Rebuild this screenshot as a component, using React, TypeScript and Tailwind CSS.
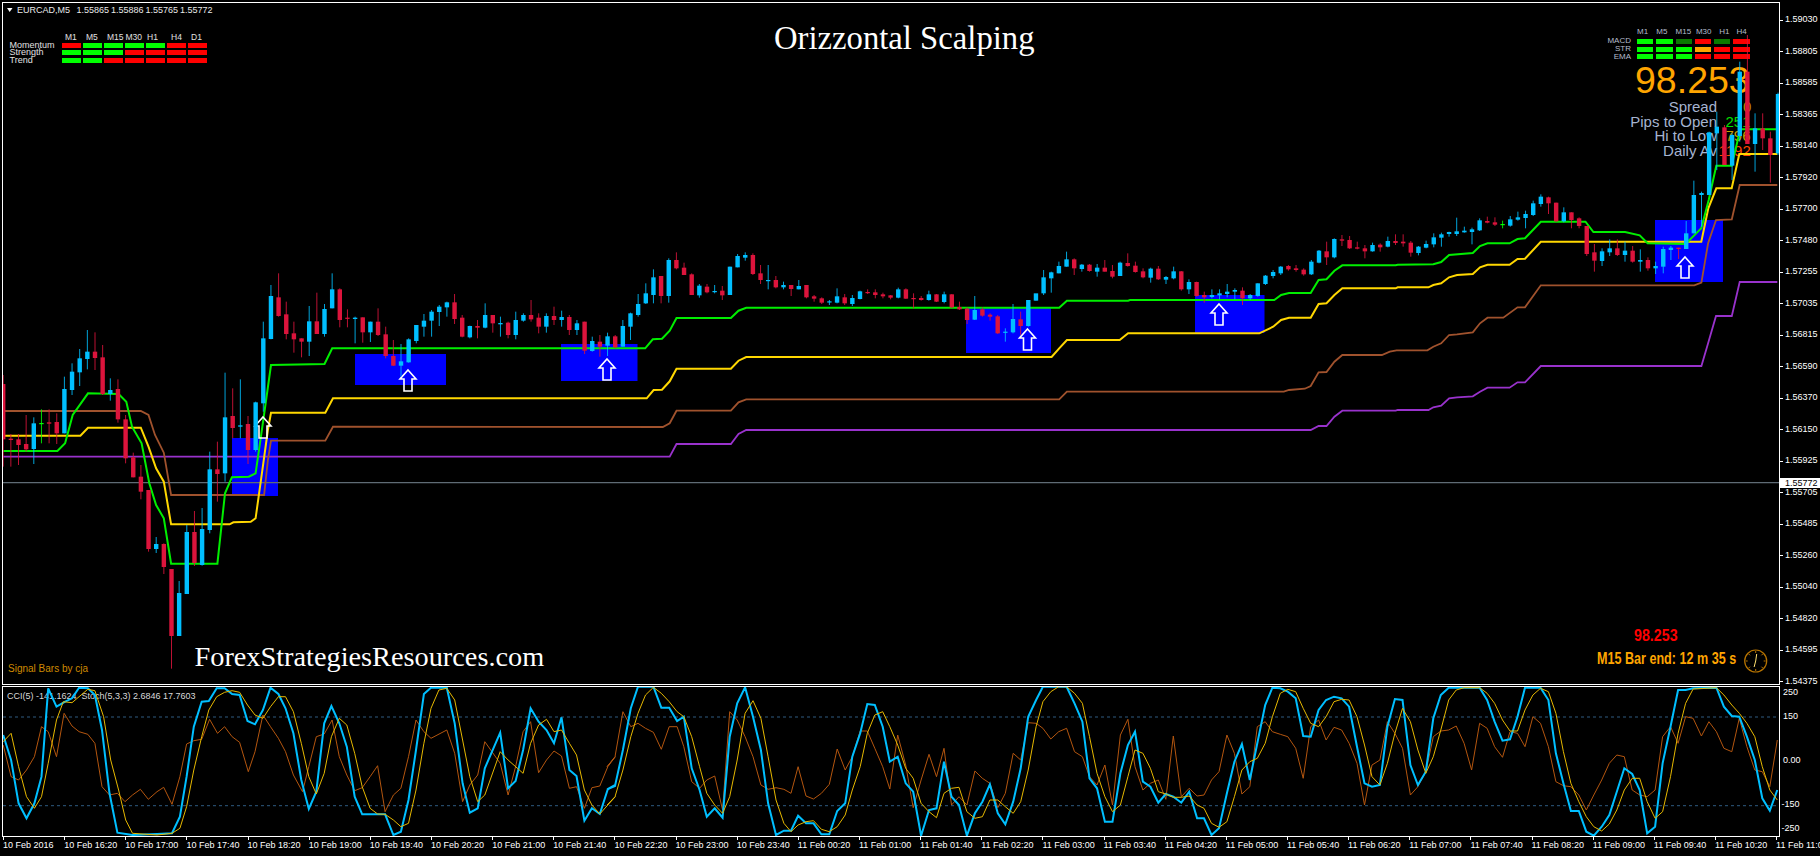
import React from "react";

type Bar = number[];
const seg3: Bar[] = [
[285,560,312,478,1],[462,560,476,480,1],[462,555,478,495,1],[405,515,492,508,1],[412,552,430,507,0],[388,490,429,431,2],[388,490,427,431,1],[400,492,426,460,1],[290,460,327,460,0],[250,345,275,330,0],
[207,318,235,277,0],[150,268,215,237,0],[157,270,215,234,1],[195,345,232,342,1],[295,362,330,342,0],[298,428,327,418,1],[405,550,418,535,1],[518,592,532,592,1],[555,658,590,635,1],[630,815,630,807,1],
[771,819,792,807,0],[790,882,792,861,1],[867,1166,867,1068,1],[903,1068,939,1068,0],[735,942,756,942,0],[693,858,756,849,1],[684,857,747,855,0],[515,760,568,750,0],[485,665,568,582,1],[278,605,412,580,0],
[325,475,408,444,1],[298,475,436,440,0],[408,552,432,510,1],[365,515,367,510,0],[125,395,175,370,0],[15,178,48,177,0],[-20,110,52,108,1],[65,178,103,162,1],[125,218,160,178,1],[175,232,175,185,1],
[78,228,124,185,0],[38,162,124,162,1],[72,170,87,162,0],[-20,85,28,85,0],[25,142,28,120,1],[88,142,113,116,1],[110,190,113,117,0],[112,188,112,157,1],[125,186,125,157,0],[85,168,125,165,1],
[140,235,163,228,1],[180,258,228,257,1],[192,290,244,257,0],[175,248,178,247,0],[135,190,135,183,0],[102,170,122,140,0],[90,170,95,122,0],[75,138,80,96,0],[65,110,67,82,0],[42,132,67,117,1],
[105,172,113,170,1],[137,175,138,172,0],[120,175,138,143,1],[70,145,105,143,0],[105,158,105,130,1],[110,170,129,133,0],[125,175,128,165,1],[95,178,120,165,0],[100,125,105,122,0],[60,125,105,118,1],
[100,160,113,140,1],[100,158,108,140,0],[80,135,108,120,1],[92,140,111,120,0],[105,165,111,150,1],[120,165,130,150,0],[125,222,125,212,1],[170,215,183,213,0],
];
const seg4: Bar[] = [
[345,410,365,380,1],[338,408,349,377,0],[345,385,349,382,1],[300,380,318,380,0],[278,360,280,320,0],[222,290,252,285,0],[190,252,220,250,0],[148,250,172,225,0],[168,250,168,228,1],[115,248,120,228,0],
[97,148,120,145,1],[128,165,143,165,1],[160,225,163,225,1],[192,233,197,226,0],[192,220,200,217,1],[195,220,213,216,0],[198,240,212,226,1],[140,225,140,225,0],[102,142,108,142,0],[97,122,105,113,0],
[100,165,105,162,1],[135,192,160,180,1],[135,208,180,182,0],[168,205,180,202,1],[185,208,195,202,0],[195,228,195,207,1],[180,208,198,208,0],[195,235,195,232,1],[225,245,229,236,1],[232,252,235,248,1],
[240,255,244,247,0],[205,250,229,248,0],[222,255,232,250,1],[225,258,234,252,0],[212,238,214,237,0],[208,222,216,218,1],[208,235,217,225,1],[218,235,223,229,1],[225,238,226,233,1],[203,235,208,233,0],
[205,237,208,236,1],[220,265,234,236,1],[228,242,234,240,1],[212,242,223,240,0],[222,246,223,245,1],[215,250,223,246,0],[222,265,223,262,1],[245,270,261,268,1],[262,312,266,300,1],[228,300,270,299,0],
[262,290,268,287,1],[280,302,284,290,1],[285,342,289,340,1],[325,365,335,338,0],[252,340,297,337,0],[275,345,298,318,1],[240,320,240,318,0],[222,242,220,242,0],[150,225,172,220,0],[155,218,157,175,0],
[125,160,138,160,0],[95,140,118,140,0],[115,165,118,145,1],[132,155,134,147,0],[132,155,134,153,1],[132,170,143,155,0],[120,155,143,155,1],[135,175,153,170,1],[125,168,128,168,0],[100,140,129,138,1],
[125,158,137,156,1],[145,175,154,172,1],[143,188,146,173,0],[138,180,146,178,1],[168,192,171,179,0],[140,178,154,175,0],[153,212,154,208,1],[178,222,186,208,0],[185,230,186,228,1],
];
const seg5: Bar[] = [
[335,368,345,352,1],[328,355,345,351,0],[328,358,340,346,0],[312,352,335,342,0],[325,358,330,335,0],[322,375,332,355,1],[342,360,345,355,0],[310,350,310,348,0],[285,315,287,312,0],[270,295,276,288,0],
[258,285,260,280,0],[255,272,258,268,1],[255,275,265,270,1],[265,287,269,283,1],[240,285,245,283,0],[210,250,212,248,0],[185,255,214,232,1],[175,235,177,232,0],[165,198,178,182,1],[168,207,180,205,1],
[185,208,202,206,1],[195,235,205,214,1],[188,215,195,214,0],[190,215,194,202,1],[170,202,183,200,0],[163,195,183,189,1],[163,200,185,190,1],[183,230,188,218,1],[198,226,200,219,0],[182,205,192,203,0],
[160,202,172,193,0],[158,200,163,173,0],[155,170,156,162,0],[113,168,154,162,0],[140,158,152,157,0],[143,193,148,156,0],[115,153,121,151,0],[110,130,123,128,1],[112,138,127,134,1],[122,145,132,135,2],
[108,140,118,137,0],[95,122,112,119,0],[92,145,102,114,0],[62,108,70,105,0],[43,80,50,72,0],[50,102,52,70,1],[68,125,68,124,1],[82,127,97,124,0],[97,145,97,120,1],[112,145,115,138,1],
[138,228,138,222,1],[192,275,217,242,1],[205,258,214,243,0],[178,228,205,217,0],[178,228,205,225,1],[185,245,212,225,0],[198,248,212,245,1],[208,275,240,245,0],[232,272,240,265,1],[245,282,258,265,0],
[200,280,207,260,0],[198,240,203,210,0],[203,237,203,207,1],
];
const seg2: Bar[] = [
[663,747,700,747,0],[542,700,585,700,0],[575,680,579,585,0],[395,585,397,585,0],[335,510,380,400,0],[375,495,382,495,1],[400,540,405,497,0],[185,425,215,408,0],[105,432,215,432,1],[340,515,385,432,0],[340,450,385,415,1],[395,548,415,465,1],[278,465,282,460,0],
];
const toReal = (s: Bar[], y0: number) => s.map((b) => [y0 + b[0] / 3, y0 + b[1] / 3, y0 + b[2] / 3, y0 + b[3] / 3, b[4]]);
const candles = [...toReal(seg3, 280), ...toReal(seg4, 220), ...toReal(seg5, 180), ...toReal(seg2, 0)];
const barColor = ["#00bfff", "#dc143c", "#00ff00"];

const conv = (f: number[], x0: number, y0: number, sx: number) => {
  const out: string[] = [];
  for (let i = 0; i < f.length; i += 2) out.push(`${(x0 + f[i] / sx).toFixed(1)},${(y0 + f[i + 1] / 3).toFixed(1)}`);
  return out.join(" ");
};
const Z3 = (f: number[]) => conv(f, 0, 280, 2.613);
const Z4 = (f: number[]) => conv(f, 600, 220, 2.613);
const Z5 = (f: number[]) => conv(f, 1200, 180, 2.529);
const Z2 = (f: number[]) => {
  const out: string[] = [];
  for (let i = 0; i < f.length; i += 2) out.push(`${(1400 + f[i] / 3).toFixed(1)},${(f[i + 1] / 3).toFixed(1)}`);
  return out.join(" ");
};
const greenLine = [
  Z3([8,513,150,513,170,490,190,405,230,340,310,342,330,365,345,440,370,490,390,610,408,675,428,715,447,851,568,851,588,640,606,592,650,590,668,580,688,420,708,255,848,252,868,205]),
  Z4([0,385,118,385,138,358,162,356,182,332,200,294,342,294,362,272,382,263,1200,263,1220,242,1380,242,1385,240,1568,240]),
  Z5([188,360,205,345,225,339,280,339,300,300,320,298,340,272,360,256,495,256,500,254,590,253,610,246,630,225,690,219,708,198,727,190,783,190,803,177,822,175,862,125,975,125,995,156,1075,156,1112,166,1132,190,1228,192]),
  Z2([904,685,926,600,949,497,995,497,1018,400,1025,388,1132,388]),
].join(" ");
const yellowLine = [
  Z3([8,467,210,467,230,443,368,443,388,500,408,565,428,605,447,733,600,733,610,727,655,725,668,715,688,550,700,450,708,398,850,398,870,355]),
  Z4([122,535,140,510,162,509,182,484,200,446,342,446,362,422,382,411,1180,411,1200,385,1220,360,1358,360,1380,340]),
  Z5([150,460,185,440,205,420,225,413,280,413,300,372,320,370,340,345,360,325,495,325,500,322,578,322,590,315,610,310,630,292,650,285,690,282,708,262,727,254,783,254,803,237,822,236,862,185]),
  Z2([904,725,925,625,949,565,995,565,1018,462,1132,462]),
].join(" ");
const brownLine = [
  Z3([8,393,368,393,388,405,405,465,428,518,447,645,690,645,700,540,708,482,850,482,870,440]),
  Z4([164,621,182,610,200,572,342,572,362,547,382,538,1200,538,1220,515]),
  Z5([212,635,225,630,265,626,280,618,300,577,320,576,340,545,360,525,460,525,480,515,497,511,575,511,590,500,610,490,630,465,650,463,690,457,708,430,727,413,767,413,803,382,822,382,862,316,1250,316,1268,308,1285,190,1305,120,1345,118,1365,15,1460,15]),
].join(" ");
const purpleLine = [
  Z3([8,530]),
  Z4([182,710,200,672,342,672,362,642,382,630]),
  Z5([280,750,300,738,320,738,340,710,360,692,495,692,500,690,578,690,590,682,610,677,630,655,650,652,690,649,708,635,727,623,783,623,803,607,822,607,862,558,1268,558,1285,490,1305,408,1345,408,1365,306,1460,306]),
].join(" ");

const Z6 = (f: number[]) => conv(f, 0, 620, 2.529);
const Z7 = (f: number[]) => conv(f, 600, 670, 2.529);
const Z8 = (f: number[]) => conv(f, 1200, 620, 2.529);
const cyanOsc = [
  Z6([8,345,28,420,47,550,67,595,87,550,105,470,122,205,143,260,165,245,182,235,200,203,222,205,240,225,258,330,277,520,297,638,335,645,397,642,435,640,455,590,472,470,490,320,510,245,528,243,548,205,568,205,587,222,606,225,626,303,645,313,665,270,684,203,704,222,722,265,742,340,762,480,781,567,800,515,820,310,838,258,858,310,877,380,897,530,916,583,974,583,995,645,1014,635,1033,540,1052,390,1072,222,1090,203,1130,203,1150,310,1170,490,1188,578,1208,565,1226,445,1265,338,1285,505,1304,483,1323,390,1342,265,1362,305,1382,330,1401,370,1420,292,1440,450,1458,468,1478,602,1497,565,1517,582,1537,508,1556,495]),
  Z7([18,358,38,348,58,240,78,115,96,50,135,50,155,113,175,113,195,153,212,140,232,295,252,360,270,440,290,415,310,443,328,200,347,100,367,52,387,140,407,240,425,400,445,495,465,482,483,482,501,437,521,460,540,460,560,493,580,493,600,423,620,400,638,260,658,190,676,102,695,105,715,170,733,275,753,260,773,340,792,365,812,497,832,420,851,415,870,275,889,380,908,405,928,497,948,430,967,395,986,343,1006,430,1025,463,1045,395,1064,295,1083,140,1103,90,1120,50,1180,50,1200,100,1220,155,1238,325,1257,355,1277,455,1296,455,1316,310,1335,225,1353,185,1373,335,1392,350,1412,398,1431,372,1450,380,1470,398,1490,365,1510,445]),
  Z8([10,595,29,645,48,625,68,520,87,425,106,372,126,480,145,370,165,255,183,203,203,205,222,215,242,235,261,348,280,350,300,270,319,240,339,230,358,235,377,260,397,380,416,490,435,500,455,495,474,320,493,237,512,240,532,435,551,495,571,455,590,295,609,225,629,203,707,203,726,240,745,305,765,362,784,358,803,290,822,203,861,203,881,240,900,400,919,490,938,573,958,573,977,635,996,647,1016,620,1035,585,1054,515,1073,445,1093,462,1112,510,1131,640,1151,620,1170,430,1190,320,1209,210,1228,210,1247,205,1306,203,1325,260,1345,288,1364,290,1383,350,1403,420,1422,535,1441,572,1460,510]),
].join(" ");
const yellowOsc = [
  Z6([8,365,28,340,47,440,67,530,87,565,105,530,122,430,143,300,160,245,182,248,200,230,222,208,240,212,262,290,280,420,300,510,318,600,335,640,397,645,435,640,455,625,472,560,490,450,510,350,528,270,548,230,568,217,587,212,606,217,626,255,645,285,665,295,684,260,704,230,722,230,742,275,762,370,781,470,800,522,820,460,838,350,858,295,877,315,897,400,916,500,936,565,955,582,974,583,995,600,1014,620,1033,610,1052,510,1072,370,1090,265,1110,210,1130,205,1150,240,1170,360,1188,470,1208,545,1226,525,1265,395,1285,420,1323,460,1342,370,1362,315,1382,298,1401,335,1420,330,1440,370,1458,405,1478,510,1497,555,1517,582,1537,555,1556,530]),
  Z7([18,405,38,380,58,300,78,200,96,130,115,75,135,52,155,70,175,95,195,125,212,140,232,200,252,290,270,370,290,405,310,430,328,380,347,270,367,130,387,92,407,145,425,260,445,390,465,460,483,485,501,465,521,455,540,452,560,478,580,485,600,470,620,435,638,360,658,290,676,190,695,135,715,125,733,170,753,225,773,295,792,325,812,400,832,425,851,443,870,370,889,355,908,352,928,425,948,445,967,440,986,390,1006,390,1025,410,1045,430,1064,395,1083,300,1103,170,1120,95,1140,65,1160,50,1180,50,1200,70,1220,100,1238,200,1257,310,1277,380,1296,425,1316,405,1335,320,1353,240,1373,250,1392,295,1412,365,1431,372,1450,382,1470,382,1490,378,1510,405]),
  Z8([10,565,29,610,48,622,68,605,87,530,106,450,126,425,145,415,165,370,183,290,203,220,222,208,242,215,261,265,280,310,300,320,319,290,339,245,358,238,377,240,397,290,416,375,435,470,455,495,474,430,493,340,512,265,532,305,551,390,571,460,590,410,609,330,629,240,648,210,668,203,707,203,726,220,745,250,765,300,784,333,803,333,822,270,842,225,861,205,881,215,900,280,919,395,938,490,958,545,977,590,996,620,1016,633,1035,612,1054,570,1073,510,1093,475,1112,475,1131,545,1151,595,1170,575,1190,470,1209,340,1228,250,1247,207,1306,203,1325,225,1345,255,1364,280,1383,310,1403,350,1422,440,1441,510,1460,540]),
].join(" ");
const brownOsc = [
  Z6([8,375,28,470,47,480,67,450,87,410,105,320,122,335,143,410,162,280,182,318,200,335,222,343,240,370,258,500,277,525,297,520,316,545,335,525,355,508,375,538,397,515,414,502,435,553,455,470,472,372,490,362,510,358,530,298,550,340,568,320,587,350,606,367,628,455,645,395,665,285,684,320,704,355,722,395,742,465,765,515,781,440,800,350,820,342,840,300,858,410,877,465,897,512,916,503,936,470,955,437,974,575,995,525,1014,505,1033,410,1052,300,1072,335,1090,355,1130,330,1150,400,1170,545,1188,495,1208,465,1226,365,1265,430,1285,525,1304,440,1323,335,1342,305,1362,458,1382,420,1401,393,1420,408,1440,505,1458,500,1478,565,1497,503,1517,498,1537,440,1556,410]),
  Z7([18,290,38,260,58,125,78,170,96,160,115,175,135,187,155,238,175,170,195,170,212,230,232,335,252,355,270,330,290,318,310,420,328,125,347,150,367,200,387,260,407,345,425,358,445,353,465,358,483,370,501,290,521,378,540,387,560,370,580,343,600,237,620,300,638,260,658,183,676,183,695,235,715,290,733,357,753,195,773,285,792,413,812,330,832,253,851,320,870,235,889,405,908,380,928,405,948,303,967,325,986,340,1006,413,1025,370,1045,250,1064,270,1083,158,1103,160,1120,175,1140,207,1160,185,1180,175,1200,245,1220,260,1238,320,1257,345,1277,285,1296,405,1316,195,1335,148,1353,290,1373,360,1392,340,1412,330,1431,388,1450,198,1470,380,1490,355,1510,378]),
  Z8([10,525,29,480,48,455,68,345,87,400,106,522,126,500,145,320,165,305,183,335,203,343,222,350,242,385,261,475,280,320,300,300,319,360,339,322,358,330,377,370,397,430,416,555,435,435,455,420,474,305,493,340,512,385,532,525,551,500,571,455,590,350,609,333,629,330,648,318,668,370,687,450,707,310,726,325,745,380,765,412,784,335,803,340,822,380,842,290,861,310,881,380,900,485,919,497,938,500,958,525,977,570,996,525,1016,480,1035,430,1054,405,1073,410,1093,510,1112,525,1131,530,1151,510,1170,350,1190,320,1209,370,1228,290,1247,295,1268,348,1287,305,1306,335,1325,385,1345,395,1364,295,1383,380,1403,450,1422,455,1441,500,1460,360]),
].join(" ");

const boxes = [[232,438,46,58],[355,354,91,31],[561,344,76.5,37],[966,308,85,45],[1195,295,69.5,38],[1655,220,68,62]];
const arrows = [[263,417],[408,370],[607,359],[1027.5,329],[1219,304],[1685,257]];
const arrowPts = (x: number, y: number) =>
  `${x},${y} ${x + 8},${y + 9} ${x + 4},${y + 9} ${x + 4},${y + 21} ${x - 4},${y + 21} ${x - 4},${y + 9} ${x - 8},${y + 9}`;

const prices = ["1.59030","1.58805","1.58585","1.58365","1.58140","1.57920","1.57700","1.57480","1.57255","1.57035","1.56815","1.56590","1.56370","1.56150","1.55925","1.55705","1.55485","1.55260","1.55040","1.54820","1.54595","1.54375"];
const times = ["10 Feb 2016","10 Feb 16:20","10 Feb 17:00","10 Feb 17:40","10 Feb 18:20","10 Feb 19:00","10 Feb 19:40","10 Feb 20:20","10 Feb 21:00","10 Feb 21:40","10 Feb 22:20","10 Feb 23:00","10 Feb 23:40","11 Feb 00:20","11 Feb 01:00","11 Feb 01:40","11 Feb 02:20","11 Feb 03:00","11 Feb 03:40","11 Feb 04:20","11 Feb 05:00","11 Feb 05:40","11 Feb 06:20","11 Feb 07:00","11 Feb 07:40","11 Feb 08:20","11 Feb 09:00","11 Feb 09:40","11 Feb 10:20","11 Feb 11:00"];

const R = "bg-[#ff0000]", G = "bg-[#00ff00]", D = "bg-[#0a7a00]", O = "bg-[#ffa500]";
const leftHeads: [string, string][] = [["M1","pl-[3px]"],["M5","pl-[3px]"],["M15","pl-[3px]"],["M30","pl-[0.5px]"],["H1","pl-[1px]"],["H4","pl-[4px]"],["D1","pl-[3px]"]];
const leftRows: [string, string[]][] = [
  ["Momentum",[R,G,G,G,G,R,R]],
  ["Strength",[G,G,G,R,R,R,R]],
  ["Trend",[G,G,R,R,R,R,R]],
];
const rightHeads: [string, string][] = [["M1","pl-0"],["M5","pl-0"],["M15","pl-0"],["M30","pl-[1px]"],["H1","pl-[5px]"],["H4","pl-[3px]"]];
const rightRows: [string, string[]][] = [
  ["MACD",[G,G,D,R,D,R]],
  ["STR",[G,G,G,O,R,R]],
  ["EMA",[G,G,G,R,R,R]],
];
const stats: [string, string, string, string][] = [
  ["Spread","0","ml-[26px]","text-[#b88a00]"],
  ["Pips to Open","251","ml-[8.5px]","text-[#00e000]"],
  ["Hi to Low","796","ml-[8.5px]","text-[#c8a000]"],
  ["Daily Av","1192","ml-[1.5px]","text-[#ff4500]"],
];
const oscLabels: [string, string, string][] = [
  ["250","h-[14px]","pl-[3px]"],
  ["150","h-[34px]","pl-[3px]"],
  ["0.00","h-[55.4px]","pl-[3px]"],
  ["-150","h-[32.6px]","pl-[1.5px]"],
  ["-250","h-[16px]","pl-[1.5px]"],
];

export default function App() {
  return (
    <div className="w-[1820px] h-[856px] bg-black overflow-hidden pt-[2px] pl-[2px] text-white text-[9px] font-['Liberation_Sans',Arial,sans-serif]">
      <div className="flex h-[683px]">
        <div className="relative w-[1778px] h-[683px] shrink-0 border border-white overflow-hidden">
          <div className="absolute left-[14px] top-[2px] flex leading-[10px] whitespace-nowrap text-[#e8e8e8]">
            <span className="w-[59.5px]">EURCAD,M5</span>
            <span className="w-[34.5px]">1.55865</span>
            <span className="w-[34.5px]">1.55886</span>
            <span className="w-[34.5px]">1.55765</span>
            <span className="w-[34.5px]">1.55772</span>
          </div>

          <div className="absolute left-[6.5px] top-[30px] flex flex-col text-[#e0e0e0]">
            <div className="flex h-[8.5px] items-center pl-[52.5px] text-[8.5px] leading-none">
              {leftHeads.map(([h, p]) => (
                <span key={h} className={`w-[19px] mr-[2px] whitespace-nowrap ${p}`}>{h}</span>
              ))}
            </div>
            {leftRows.map(([label, cells]) => (
              <div key={label} className="flex h-[7.6px] items-center leading-none">
                <span className="w-[52.5px]">{label}</span>
                {cells.map((c, i) => (
                  <span key={i} className={`w-[19px] h-[5px] mr-[2px] ${c}`} />
                ))}
              </div>
            ))}
          </div>

          <div className="absolute left-[771px] top-[17px] text-[32.7px] leading-[36px] whitespace-nowrap font-['Liberation_Serif',serif]">Orizzontal Scalping</div>

          <div className="absolute left-[1597px] top-[25px] flex flex-col text-[8px] leading-none text-[#b4bccc]">
            <div className="flex h-[8px] items-center pl-[37px] mb-[1.7px]">
              {rightHeads.map(([h, p]) => (
                <span key={h} className={`w-[16.3px] mr-[3px] whitespace-nowrap ${p}`}>{h}</span>
              ))}
            </div>
            {rightRows.map(([label, cells]) => (
              <div key={label} className="flex h-[7.6px] items-center">
                <span className="w-[31px] mr-[6px] text-right">{label}</span>
                {cells.map((c, i) => (
                  <span key={i} className={`w-[16.3px] h-[5px] mr-[3px] ${c}`} />
                ))}
              </div>
            ))}
          </div>

          <div className="absolute left-[1632px] top-[56px] text-[37.5px] leading-[42px] text-[#ffa500]">98.253</div>

          <div className="absolute left-[1597px] top-[96.7px] flex flex-col text-[15px] text-[#a6b4d0]">
            {stats.map(([label, value, ml, color]) => (
              <div key={label} className="flex h-[14.5px] items-center leading-none whitespace-nowrap">
                <span className="w-[117px] text-right">{label}</span>
                <span className={`${ml} ${color}`}>{value}</span>
              </div>
            ))}
          </div>

          <div className="absolute left-[5px] top-[660px] text-[10px] leading-[12px] text-[#cf8a00]">Signal Bars by cja</div>
          <div className="absolute left-[191.5px] top-[638px] text-[28.3px] leading-[32px] whitespace-nowrap font-['Liberation_Serif',serif]">ForexStrategiesResources.com</div>
          <div className="absolute left-[1631px] top-[624.7px] text-[16px] leading-[16px] font-bold text-[#ff0000] whitespace-nowrap origin-left scale-x-[0.89]">98.253</div>
          <div className="absolute left-[1593.6px] top-[648px] text-[17px] leading-[16px] font-bold text-[#ffa500] whitespace-nowrap origin-left scale-x-[0.74]">M15 Bar end: 12 m 35 s</div>

          <svg className="absolute inset-0 w-[1776px] h-[681px]" viewBox="3 3 1776 681" fill="none">
            {boxes.map(([x, y, w, h], i) => (
              <rect key={i} x={x} y={y} width={w} height={h} fill="#0000ff" />
            ))}
            <line x1="3" y1="482.7" x2="1779" y2="482.7" stroke="#5f6b75" strokeWidth="1.2" />
            <polyline points={purpleLine} stroke="#9932cc" strokeWidth="1.8" />
            <polyline points={brownLine} stroke="#a0522d" strokeWidth="1.8" />
            <polyline points={yellowLine} stroke="#ffd700" strokeWidth="2" />
            <polyline points={greenLine} stroke="#00ee00" strokeWidth="2" />
            {arrows.map(([x, y], i) => (
              <polygon key={i} points={arrowPts(x, y)} stroke="#ffffff" strokeWidth="1.6" />
            ))}
            {candles.map((b, i) => {
              const x = 3.2 + i * 7.65;
              const c = barColor[b[4]];
              return (
                <g key={i}>
                  <line x1={x} x2={x} y1={b[0]} y2={b[1]} stroke={c} strokeWidth="1" opacity="0.85" />
                  <rect x={x - 2.2} y={b[2]} width="4.4" height={Math.max(1.2, b[3] - b[2])} fill={c} />
                </g>
              );
            })}
            <polygon points="7,8 12.5,8 9.7,12" fill="#ffffff" />
            <g stroke="#b87400">
              <circle cx="1755.7" cy="661" r="11" strokeWidth="1.2" />
              <path d="M1755.7 651v2M1755.7 669v2M1745.7 661h2M1763.7 661h2M1748.6 653.9l1.4 1.4M1761.4 666.7l1.4 1.4M1748.6 668.1l1.4-1.4M1761.4 655.3l1.4-1.4" strokeWidth="1" />
            </g>
            <path d="M1755.7 661l1-7M1755.7 661l-1.6 6" stroke="#ffe070" strokeWidth="1" />
          </svg>
        </div>
        <div className="relative w-[40px] shrink-0 h-full pt-[2.25px] text-[9px]">
          {prices.map((p) => (
            <div key={p} className="flex h-[31.5px] shrink-0 items-center whitespace-nowrap">
              <span className="w-[3px] h-px bg-white" />
              <span className="ml-[2px]">{p}</span>
            </div>
          ))}
          <div className="absolute left-0 top-[476px] w-[40px] h-[10px] bg-white text-black leading-[10px] pl-[5px]">1.55772</div>
        </div>
      </div>

      <div className="flex h-[151px] mt-px">
        <div className="relative w-[1778px] h-[151px] shrink-0 border border-white overflow-hidden">
          <div className="absolute left-[4px] top-[4px] leading-[10px] whitespace-pre text-[#d8d8d8]">CCI(5) -141.1624  Stoch(5,3,3) 2.6846 17.7603</div>
          <svg className="absolute inset-0 w-[1776px] h-[149px]" viewBox="3 687 1776 149" fill="none">
            <line x1="3" x2="1779" y1="717" y2="717" stroke="#2e5a80" strokeDasharray="3 3" />
            <line x1="3" x2="1779" y1="805.7" y2="805.7" stroke="#2e5a80" strokeDasharray="3 3" />
            <polyline points={brownOsc} stroke="#b4560f" strokeWidth="1" />
            <polyline points={cyanOsc} stroke="#00bfff" strokeWidth="2" />
            <polyline points={yellowOsc} stroke="#e6b800" strokeWidth="1" />
          </svg>
        </div>
        <div className="w-[40px] shrink-0 flex flex-col text-[9px]">
          {oscLabels.map(([t, h, p]) => (
            <div key={t} className={`flex items-center ${h} ${p}`}>{t}</div>
          ))}
        </div>
      </div>

      <div className="flex pl-px">
        {times.map((t) => (
          <div key={t} className="w-[61.15px] shrink-0 flex flex-col">
            <span className="w-px h-[3px] bg-white" />
            <span className="h-[10px] leading-[10px] whitespace-nowrap">{t}</span>
          </div>
        ))}
      </div>
    </div>
  );
}
